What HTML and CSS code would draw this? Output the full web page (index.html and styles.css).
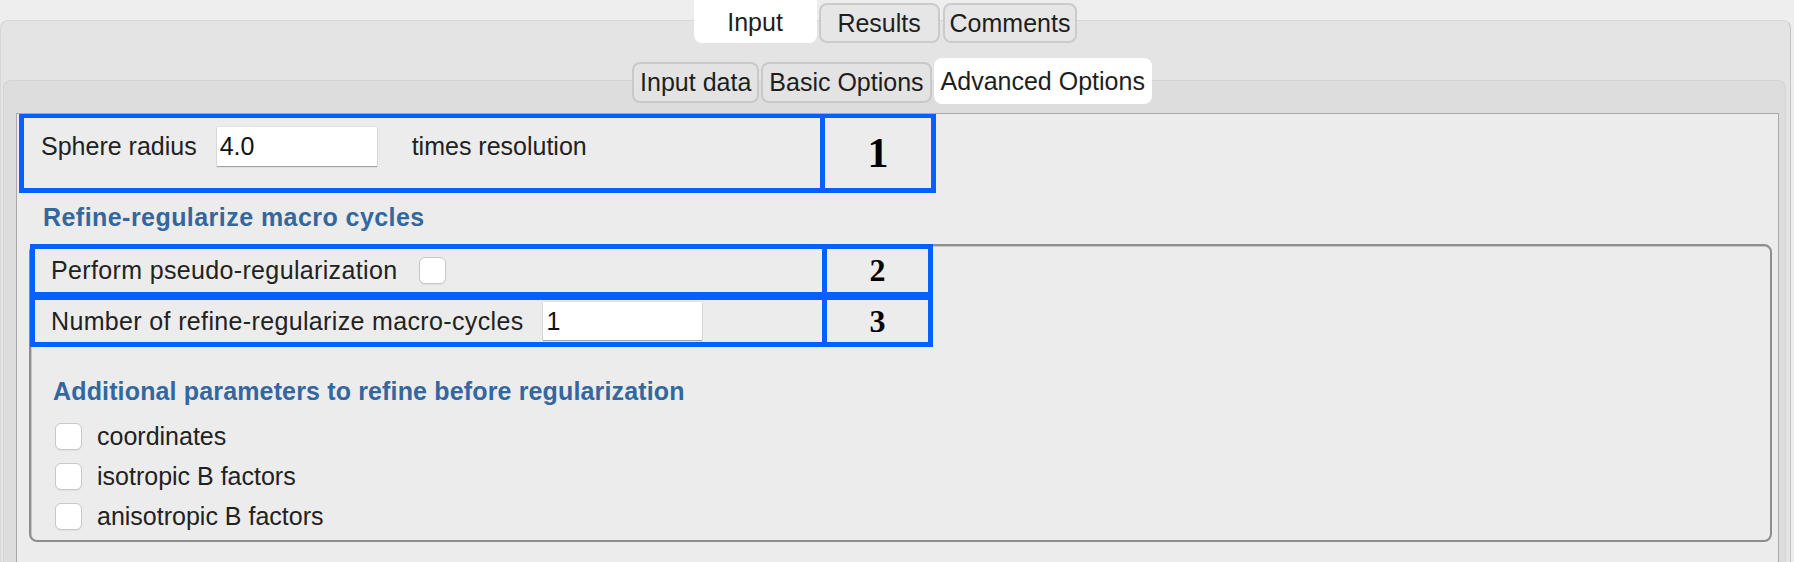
FILE: index.html
```html
<!DOCTYPE html>
<html>
<head>
<meta charset="utf-8">
<link rel="stylesheet" href="styles.css">
</head>
<body>
<div class="window">
  <div class="outer">
    <div class="tabs tabs-top">
      <div class="tab top sel">Input</div>
      <div class="tab top">Results</div>
      <div class="tab top">Comments</div>
    </div>
    <div class="inner">
      <div class="tabs tabs-sub">
        <div class="tab sub">Input data</div>
        <div class="tab sub">Basic Options</div>
        <div class="tab sub sel">Advanced Options</div>
      </div>
      <div class="content">
        <div class="hl hl-1">
          <div class="hl-main main-1">
            <span class="label">Sphere radius</span>
            <input class="field field-radius" type="text" value="4.0">
            <span class="label after">times resolution</span>
          </div>
          <div class="hl-num num-big">1</div>
        </div>
        <div class="section-title main-title">Refine-regularize macro cycles</div>
        <div class="group">
          <div class="hl hl-2">
            <div class="hl-main main-row">
              <span class="label wide">Perform pseudo-regularization</span>
              <span class="cb cb-inline"></span>
            </div>
            <div class="hl-num num-small">2</div>
          </div>
          <div class="hl hl-3">
            <div class="hl-main main-row">
              <span class="label wide">Number of refine-regularize macro-cycles</span>
              <input class="field field-cycles" type="text" value="1">
            </div>
            <div class="hl-num num-small">3</div>
          </div>
          <div class="section-title sub-title">Additional parameters to refine before regularization</div>
          <div class="check-row"><span class="cb"></span><span class="label">coordinates</span></div>
          <div class="check-row"><span class="cb"></span><span class="label">isotropic B factors</span></div>
          <div class="check-row"><span class="cb"></span><span class="label">anisotropic B factors</span></div>
        </div>
      </div>
    </div>
  </div>
</div>
</body>
</html>
```
FILE: styles.css
```css
html, body {
  margin: 0;
  padding: 0;
  background: #eeeeee;
  overflow: hidden;
}
body {
  font-family: "Liberation Sans", Arial, sans-serif;
  font-size: 25px;
  color: #222222;
  width: 1794px;
  height: 562px;
}
.window {
  padding-top: 20px;
  height: 542px;
}
.outer {
  display: flex;
  flex-direction: column;
  width: 1791px;
  box-sizing: border-box;
  height: 542px;
  background: #e4e4e4;
  border: 1px solid #d7d7d7;
  border-right-color: #c4c4c4;
  border-bottom: none;
  border-radius: 8px 8px 0 0;
}
.tabs {
  display: flex;
  justify-content: center;
  align-items: flex-end;
  position: relative;
  z-index: 1;
  flex: none;
}
.tabs-top {
  margin-top: -21px;
  height: 43px;
  gap: 2px;
  padding-right: 20px;
}
.tab {
  box-sizing: border-box;
  display: flex;
  align-items: center;
  justify-content: center;
  white-space: nowrap;
  color: #1e1e1e;
}
.tab.top {
  min-width: 121px;
  height: 40px;
  padding: 0 5px;
  background: #e6e6e6;
  border: 2px solid #cbcbcb;
  border-radius: 8px;
}
.tab.top.sel {
  min-width: 123px;
  height: 43px;
  background: #ffffff;
  border: none;
  border-radius: 0 0 8px 8px;
  padding-top: 2px;
}
.tab.top + .tab.top:last-child {
  margin-left: 1px;
}
.inner {
  flex: 1;
  display: flex;
  flex-direction: column;
  margin: 37px 4px 0 2px;
  background: #dddddd;
  border: 1px solid #d3d3d3;
  border-bottom: none;
  border-radius: 8px 8px 0 0;
}
.tabs-sub {
  margin-top: -23px;
  height: 46px;
  gap: 2px;
  padding-right: 5px;
}
.tab.sub {
  height: 41px;
  padding: 0 6px;
  margin-bottom: 1px;
  background: #e3e3e3;
  border: 2px solid #c9c9c9;
  border-radius: 8px;
}
.tab.sub.sel {
  height: 46px;
  padding: 0 7px;
  margin-bottom: 0;
  background: #ffffff;
  border: none;
  border-radius: 8px;
}
.content {
  flex: 1;
  margin: 9px 6px 0 12px;
  background: #ececec;
  border: 1px solid #a9a9a9;
  border-bottom: none;
  overflow: hidden;
}
.hl {
  display: flex;
  box-sizing: border-box;
  border: 5px solid #0660ff;
}
.hl-1 {
  width: 917px;
  height: 80px;
  margin: -1px 0 0 2px;
}
.hl-main {
  flex: 1;
  display: flex;
  align-items: center;
  border-right: 5px solid #0660ff;
}
.main-1 {
  align-items: flex-start;
  padding: 9px 0 0 17px;
}
.main-1 .label {
  line-height: 39px;
}
.main-row {
  padding-left: 16px;
}
.label.wide {
  letter-spacing: 0.35px;
}
.hl-num {
  display: flex;
  align-items: center;
  justify-content: center;
  font-family: "Liberation Serif", "Times New Roman", serif;
  font-weight: bold;
  color: #000000;
}
.hl-1 .hl-num {
  width: 106px;
}
.num-big {
  font-size: 42px;
}
.num-small {
  font-size: 32px;
  width: 101px;
}
.field {
  box-sizing: border-box;
  height: 39px;
  border: none;
  background: #ffffff;
  font-family: "Liberation Sans", Arial, sans-serif;
  font-size: 25px;
  color: #111111;
  padding: 0 3px;
  box-shadow: 0 1px 1px rgba(0, 0, 0, 0.28), 0 0 0 0.5px rgba(0, 0, 0, 0.08);
  outline: none;
}
.field-radius {
  width: 160px;
  margin-left: 20px;
}
.after {
  margin-left: 35px;
}
.field-cycles {
  width: 159px;
  height: 38px;
  margin-left: 20px;
}
.section-title {
  font-weight: bold;
  color: #33679e;
  line-height: 29px;
}
.main-title {
  margin: 10px 0 12px 26px;
  letter-spacing: 0.45px;
}
.group {
  margin: 0 6px 0 12px;
  height: 298px;
  box-sizing: border-box;
  border: 2px solid #8d8d8d;
  border-radius: 8px;
  box-shadow: inset 1px 1px 0 #c6c6c6;
}
.hl-2, .hl-3 {
  width: 903px;
  margin-left: -1px;
}
.hl-2 {
  height: 52px;
  margin-top: -2px;
  border-bottom-width: 4px;
}
.hl-3 {
  height: 51px;
  border-top-width: 4px;
}
.cb {
  display: block;
  flex: none;
  box-sizing: border-box;
  width: 27px;
  height: 27px;
  background: #ffffff;
  border: 1px solid #c8c8c8;
  border-radius: 6px;
  box-shadow: 0 1px 1px rgba(0, 0, 0, 0.06);
}
.cb-inline {
  margin-left: 22px;
}
.sub-title {
  margin: 30px 0 10px 22px;
  letter-spacing: 0.15px;
}
.check-row {
  display: flex;
  align-items: center;
  height: 40px;
  padding-left: 24px;
}
.check-row .label {
  margin-left: 15px;
}
```
